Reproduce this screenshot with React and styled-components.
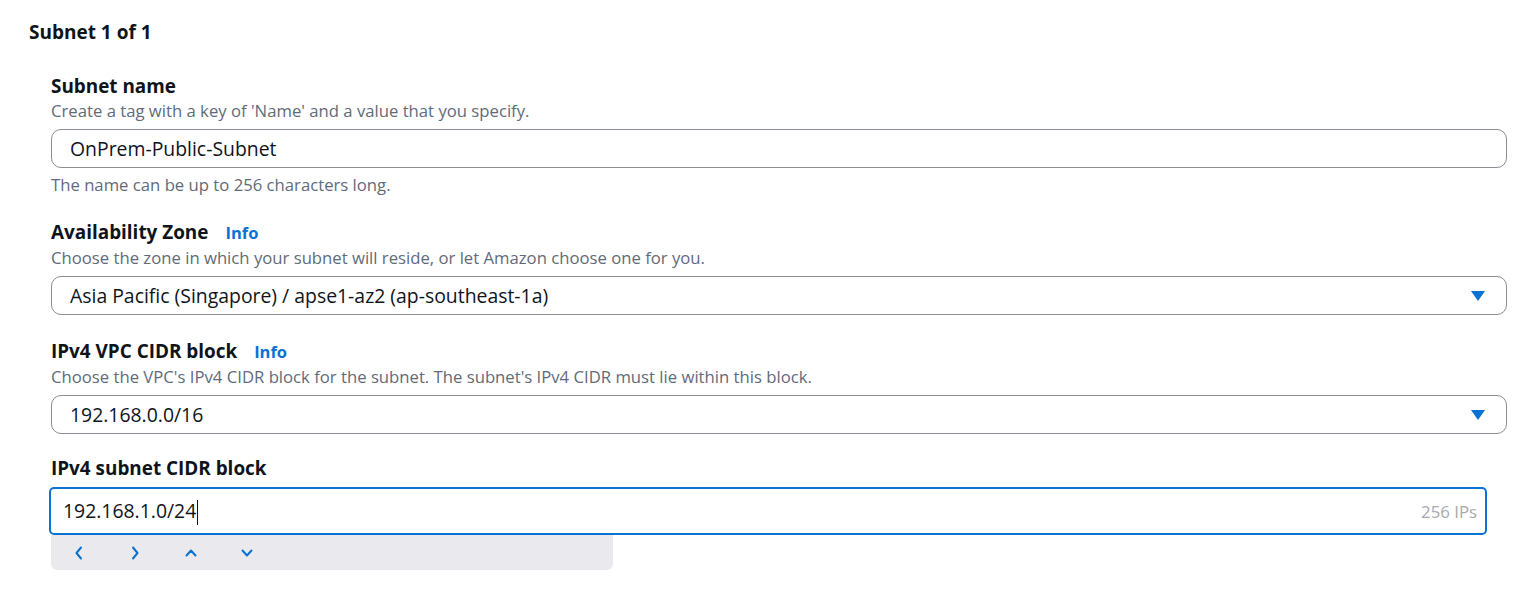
import React from 'react';
import styled, { createGlobalStyle } from 'styled-components';

const Global = createGlobalStyle`
  * { box-sizing: border-box; }
  body {
    margin: 0;
    background: #fff;
    font-family: "Open Sans", "Noto Sans", sans-serif;
    color: #0f141a;
  }
`;

const Page = styled.div`
  padding: 18px 18px 0 29px;
`;

const Title = styled.h2`
  margin: 0 0 27px;
  font-size: 19px;
  font-weight: 700;
  line-height: 28px;
`;

const Fields = styled.div`
  display: flex;
  flex-direction: column;
  gap: 23px;
  padding-left: 22px;
`;

const Field = styled.div`
  display: flex;
  flex-direction: column;
  margin-top: ${p => p.$shift || 0}px;
`;

const LabelRow = styled.div`
  display: flex;
  align-items: baseline;
  gap: 17px;
  font-size: 18.9px;
  font-weight: 700;
  line-height: 26px;
`;

const Info = styled.a`
  color: #0972d3;
  font-size: 16.5px;
  font-weight: 700;
  text-decoration: none;
`;

const Desc = styled.div`
  font-size: 16.7px;
  line-height: ${p => (p.$hint ? 22 : 24)}px;
  color: #5f6b7a;
  margin-top: ${p => (p.$hint ? 6 : 0)}px;
`;

const Box = styled.div`
  display: flex;
  align-items: center;
  height: ${p => (p.$focus ? 48 : 39)}px;
  margin-top: 6px;
  margin-left: ${p => (p.$focus ? -2 : 0)}px;
  margin-right: ${p => (p.$focus ? 20 : 0)}px;
  padding: 0 ${p => (p.$focus ? 8 : 21)}px 0 ${p => (p.$focus ? 12 : 18)}px;
  border: ${p => (p.$focus ? '2px solid #0972d3' : '1.5px solid #8c8c94')};
  border-radius: ${p => (p.$focus ? 5 : 10)}px;
  font-size: 19.4px;
  color: #0f141a;
`;

const Value = styled.span`
  flex: 1;
  white-space: nowrap;
`;

const Caret = styled.span`
  display: inline-block;
  width: 0;
  height: 0;
  border-left: 7px solid transparent;
  border-right: 7px solid transparent;
  border-top: 10px solid #0972d3;
`;

const Cursor = styled.span`
  display: inline-block;
  width: 1px;
  height: 25px;
  background: #0f141a;
  vertical-align: middle;
  margin-left: 1px;
`;

const Count = styled.span`
  font-size: 16.8px;
  color: #a8a8b0;
`;

const Toolbar = styled.div`
  display: flex;
  align-items: center;
  width: 562px;
  height: 35px;
  background: #e9e9ee;
  border-radius: 0 0 6px 6px;
  padding-left: 21px;
  gap: 42px;
`;

const Arrow = styled.svg`
  width: 14px;
  height: 14px;
  stroke: #0972d3;
  stroke-width: 2;
  fill: none;
  stroke-linecap: round;
  stroke-linejoin: round;
`;

const paths = ['M9 1.5 L4.5 7 L9 12.5', 'M5 1.5 L9.5 7 L5 12.5', 'M2.5 9.5 L7 4.5 L11.5 9.5', 'M2.5 4.5 L7 9.5 L11.5 4.5'];

export default function App() {
  return (
    <>
      <Global />
      <Page>
        <Title>Subnet 1 of 1</Title>
        <Fields>
          <Field>
            <LabelRow>Subnet name</LabelRow>
            <Desc>Create a tag with a key of 'Name' and a value that you specify.</Desc>
            <Box>
              <Value>OnPrem-Public-Subnet</Value>
            </Box>
            <Desc $hint>The name can be up to 256 characters long.</Desc>
          </Field>
          <Field>
            <LabelRow>
              Availability Zone <Info>Info</Info>
            </LabelRow>
            <Desc>Choose the zone in which your subnet will reside, or let Amazon choose one for you.</Desc>
            <Box>
              <Value>Asia Pacific (Singapore) / apse1-az2 (ap-southeast-1a)</Value>
              <Caret />
            </Box>
          </Field>
          <Field>
            <LabelRow>
              IPv4 VPC CIDR block <Info>Info</Info>
            </LabelRow>
            <Desc>Choose the VPC's IPv4 CIDR block for the subnet. The subnet's IPv4 CIDR must lie within this block.</Desc>
            <Box>
              <Value>192.168.0.0/16</Value>
              <Caret />
            </Box>
          </Field>
          <Field $shift={-2}>
            <LabelRow>IPv4 subnet CIDR block</LabelRow>
            <Box $focus>
              <Value>
                192.168.1.0/24
                <Cursor />
              </Value>
              <Count>256 IPs</Count>
            </Box>
            <Toolbar>
              {paths.map(d => (
                <Arrow key={d} viewBox="0 0 14 14">
                  <path d={d} />
                </Arrow>
              ))}
            </Toolbar>
          </Field>
        </Fields>
      </Page>
    </>
  );
}
